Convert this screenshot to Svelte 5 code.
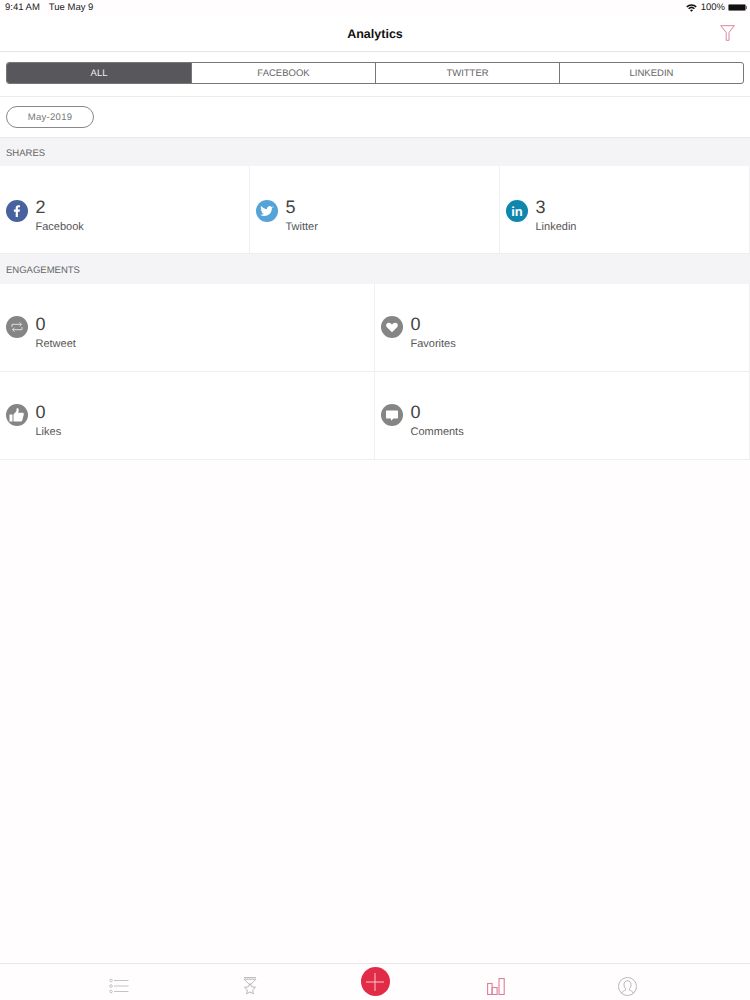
<script>
  const tabs = ['ALL', 'FACEBOOK', 'TWITTER', 'LINKEDIN'];
  const shares = [
    { id: 'fb', value: 2, label: 'Facebook' },
    { id: 'tw', value: 5, label: 'Twitter' },
    { id: 'in', value: 3, label: 'Linkedin' }
  ];
  const engagements = [
    { id: 'rt', value: 0, label: 'Retweet' },
    { id: 'fav', value: 0, label: 'Favorites' },
    { id: 'like', value: 0, label: 'Likes' },
    { id: 'com', value: 0, label: 'Comments' }
  ];
</script>

{#snippet badge(id)}
  <svg class="badge" viewBox="0 0 22 22" width="22" height="22">
    {#if id === 'fb'}
      <circle cx="11" cy="11" r="11" fill="#47629f" />
      <path d="M11.9 17v-5.3h1.8l.3-2.1h-2.1V8.300c0-.6.2-1 1-1H14V5.400c-.2 0-.9-.1-1.600-.1-1.600 0-2.700 1-2.700 2.800v1.500H7.900v2.100h1.800V17z" fill="#fff" />
    {:else if id === 'tw'}
      <circle cx="11" cy="11" r="11" fill="#55a3d8" />
      <path d="M17.500 7.200c-.5.2-1 .4-1.500.4.5-.3 1-.8 1.200-1.400-.5.3-1 .5-1.700.7a2.650 2.650 0 0 0-4.500 2.400C8.300 8.700 6.400 7.700 5.100 6.100c-.7 1.200-.4 2.700.8 3.500-.4 0-.8-.1-1.200-.3 0 1.300.9 2.400 2.100 2.600-.4.1-.8.1-1.200 0 .3 1.100 1.300 1.800 2.500 1.800-1.100.9-2.400 1.200-3.900 1.100 1.200.8 2.600 1.200 4.100 1.200 5 0 7.800-4.200 7.600-8 .5-.3 1-.8 1.600-1.800z" fill="#fff" />
    {:else if id === 'in'}
      <circle cx="11" cy="11" r="11" fill="#0f86ad" />
      <text x="11" y="15.500" text-anchor="middle" class="in">in</text>
    {:else if id === 'rt'}
      <circle cx="11" cy="11" r="11" fill="#858585" />
      <path d="M6 11V8.300h9.500M13.500 6.300l2 2-2 2M16 11v2.700H6.500M8.500 11.700l-2 2 2 2" fill="none" stroke="#ddd" stroke-width="1" />
    {:else if id === 'fav'}
      <circle cx="11" cy="11" r="11" fill="#858585" />
      <path d="M11 16.300 5.900 11.200C4.300 9.500 5.400 6.700 7.800 6.700c1.400 0 2.500.8 3.200 1.900.7-1.100 1.800-1.900 3.200-1.900 2.400 0 3.500 2.800 1.900 4.500z" fill="#fff" />
    {:else if id === 'like'}
      <circle cx="11" cy="11" r="11" fill="#858585" />
      <path d="M3.500 10.500h3v7h-3zM7.500 10.500l2.800-3.200.5-3.300c1.500 0 2.200 1.300 1.900 2.800l-.5 2h4.300c1 0 1.600.8 1.300 1.700l-1.500 5.700c-.2.800-.8 1.300-1.700 1.300H7.500z" fill="#fff" />
    {:else}
      <circle cx="11" cy="11" r="11" fill="#858585" />
      <path d="M6 6.500h10c.6 0 1 .4 1 1v6c0 .6-.4 1-1 1h-3.500L10 16.800v-2.300H6c-.6 0-1-.4-1-1v-6c0-.6.4-1 1-1z" fill="#fff" />
    {/if}
  </svg>
{/snippet}

<div class="page">
  <div class="status">
    <span class="time">9:41 AM</span>
    <span>Tue May 9</span>
    <span class="spacer"></span>
    <svg width="11" height="8" viewBox="0 0 12 9">
      <path d="M6 8.800 4.300 6.900a2.500 2.500 0 0 1 3.400 0zM3.300 5.900 2.200 4.700a5.600 5.600 0 0 1 7.600 0L8.700 5.900a4 4 0 0 0-5.400 0zM1.300 3.800.1 2.600a8.600 8.600 0 0 1 11.800 0l-1.200 1.200a7 7 0 0 0-9.400 0z" fill="#111" />
    </svg>
    <span class="pct">100%</span>
    <div class="battery"></div>
    <div class="nub"></div>
  </div>

  <header class="nav">
    <h1>Analytics</h1>
    <svg class="filter" width="15" height="16" viewBox="0 0 15 16">
      <path d="M.7.700h13.600L9 7.500v7.800H6.200V7.500z" fill="none" stroke="#dd8499" stroke-width="1" />
    </svg>
  </header>

  <div class="seg-row">
    <div class="seg">
      {#each tabs as tab, i}
        <div class="seg-item" class:active={i === 0}>{tab}</div>
      {/each}
    </div>
  </div>

  <div class="pill-row">
    <div class="pill">May-2019</div>
  </div>

  <div class="section first">SHARES</div>
  <div class="grid three">
    {#each shares as s}
      <div class="cell">
        {@render badge(s.id)}
        <div class="info">
          <div class="value">{s.value}</div>
          <div class="label">{s.label}</div>
        </div>
      </div>
    {/each}
  </div>

  <div class="section">ENGAGEMENTS</div>
  <div class="grid two">
    {#each engagements as e}
      <div class="cell">
        {@render badge(e.id)}
        <div class="info">
          <div class="value">{e.value}</div>
          <div class="label">{e.label}</div>
        </div>
      </div>
    {/each}
  </div>

  <div class="fill"></div>

  <nav class="tabbar">
    <svg width="20" height="16" viewBox="0 0 20 16" fill="none" stroke="#c4c4c4">
      <circle cx="2" cy="2.500" r="1.300" />
      <circle cx="2" cy="8" r="1.300" />
      <circle cx="2" cy="13.500" r="1.300" />
      <path d="M5 2.500h14.500M5 8h14.500M5 13.500h14.500" />
    </svg>
    <svg width="14" height="18" viewBox="0 0 14 18" fill="none" stroke="#b9b9b9">
      <path d="M1 .6h12M1 2.200h12L7 8.200zM7 6.500l1.700 3.300 3.800.5-2.800 2.600.7 3.900L7 15l-3.400 1.800.7-3.900-2.800-2.600 3.800-.5z" />
    </svg>
    <button class="add" aria-label="Add">
      <svg width="20" height="20" viewBox="0 0 20 20">
        <path d="M10 1v18M1 10h18" stroke="#f6c6cf" stroke-width="1" />
      </svg>
    </button>
    <svg width="18" height="17" viewBox="0 0 18 17" fill="none" stroke="#de7f97" stroke-width="1.100">
      <rect x=".6" y="5.500" width="4.500" height="11" />
      <rect x="5.100" y="9.500" width="5" height="7" />
      <rect x="12" y=".6" width="5.200" height="15.900" />
    </svg>
    <svg width="19" height="19" viewBox="0 0 19 19" fill="none" stroke="#b9b9b9">
      <circle cx="9.500" cy="9.500" r="9" />
      <path d="M3.700 16.300c.4-2 2.600-2.600 3.900-3.200v-1.400c-1-.9-1.600-2.200-1.600-4 0-2.300 1.400-4 3.500-4s3.500 1.700 3.500 4c0 1.800-.6 3.100-1.600 4v1.400c1.300.6 3.500 1.200 3.900 3.200" />
    </svg>
  </nav>
</div>

<style>
  :global(body) {
    margin: 0;
    background: #fffdfe;
  }

  .page {
    width: 750px;
    height: 1000px;
    display: flex;
    flex-direction: column;
    font-family: "Liberation Sans", Arial, sans-serif;
    text-rendering: geometricPrecision;
    color: #444;
    overflow: hidden;
  }

  .status {
    height: 15px;
    padding: 0 3px 0 5px;
    display: flex;
    align-items: center;
    font-size: 9.500px;
    color: #222;
  }

  .time {
    margin-right: 9px;
  }

  .spacer {
    flex: 1;
  }

  .pct {
    margin: 0 3px 0 4px;
  }

  .battery {
    width: 16px;
    height: 5px;
    background: #111;
    border-radius: 1.500px;
    border: 1px solid #777;
  }

  .nub {
    width: 1px;
    height: 3px;
    background: #777;
  }

  .nav {
    height: 36px;
    display: flex;
    align-items: center;
    justify-content: center;
    position: relative;
    background: #fff;
    border-bottom: 1px solid #e6e6e6;
  }

  h1 {
    margin: 0;
    font-size: 12.500px;
    font-weight: bold;
    color: #111;
    padding-top: 1px;
  }

  .filter {
    position: absolute;
    right: 15px;
    top: 10px;
  }

  .seg-row {
    height: 45px;
    padding: 10px 6px 0;
    box-sizing: border-box;
    background: #fff;
    border-bottom: 1px solid #ececec;
  }

  .seg {
    height: 22px;
    display: grid;
    grid-template-columns: repeat(4, 1fr);
    border: 1px solid #777;
    border-radius: 3px;
    overflow: hidden;
    box-sizing: border-box;
  }

  .seg-item {
    display: flex;
    align-items: center;
    justify-content: center;
    font-size: 9.500px;
    color: #666;
    border-left: 1px solid #777;
  }

  .seg-item:first-child {
    border-left: none;
  }

  .seg-item.active {
    background: #58585c;
    color: #eee;
  }

  .pill-row {
    height: 41px;
    padding: 9px 6px 0;
    box-sizing: border-box;
    background: #fff;
    border-bottom: 1px solid #e8e8e8;
  }

  .pill {
    width: 88px;
    height: 22px;
    box-sizing: border-box;
    border: 1px solid #888;
    border-radius: 11px;
    display: flex;
    align-items: center;
    justify-content: center;
    font-size: 9.500px;
    color: #777;
    letter-spacing: 0.300px;
  }

  .section {
    height: 30px;
    padding: 3px 6px 0;
    box-sizing: border-box;
    display: flex;
    align-items: center;
    background: #f4f4f6;
    font-size: 9.500px;
    color: #666;
  }

  .section.first {
    height: 28px;
    padding-top: 2px;
  }

  .grid {
    display: grid;
    background: #fff;
  }

  .three {
    grid-template-columns: repeat(3, 1fr);
  }

  .two {
    grid-template-columns: repeat(2, 1fr);
  }

  .cell {
    height: 88px;
    box-sizing: border-box;
    padding: 30px 6px 0;
    display: flex;
    gap: 7.500px;
    border-right: 1px solid #f0f0f0;
    border-bottom: 1px solid #eeeeee;
  }

  .three .cell {
    padding-top: 32px;
  }

  .badge {
    flex: none;
    margin-top: 2px;
  }

  .in {
    font-family: "Liberation Sans", Arial, sans-serif;
    font-size: 13px;
    font-weight: bold;
    fill: #fff;
  }

  .value {
    font-size: 18px;
    line-height: 20px;
    color: #444;
  }

  .label {
    margin-top: 3px;
    font-size: 11px;
    line-height: 15px;
    color: #555;
  }

  .three .value {
    margin-top: -1px;
  }

  .fill {
    flex: 1;
  }

  .tabbar {
    height: 37px;
    box-sizing: border-box;
    border-top: 1px solid #e8e8e8;
    padding-top: 8px;
    display: grid;
    grid-template-columns: 237px 26px 224px 18px 1fr;
    grid-template-rows: 28px;
    justify-items: center;
    align-items: center;
  }

  .add {
    width: 29px;
    height: 29px;
    padding: 0;
    border: none;
    border-radius: 50%;
    background: #e22c47;
    display: flex;
    align-items: center;
    justify-content: center;
    margin-bottom: 9px;
  }
</style>
